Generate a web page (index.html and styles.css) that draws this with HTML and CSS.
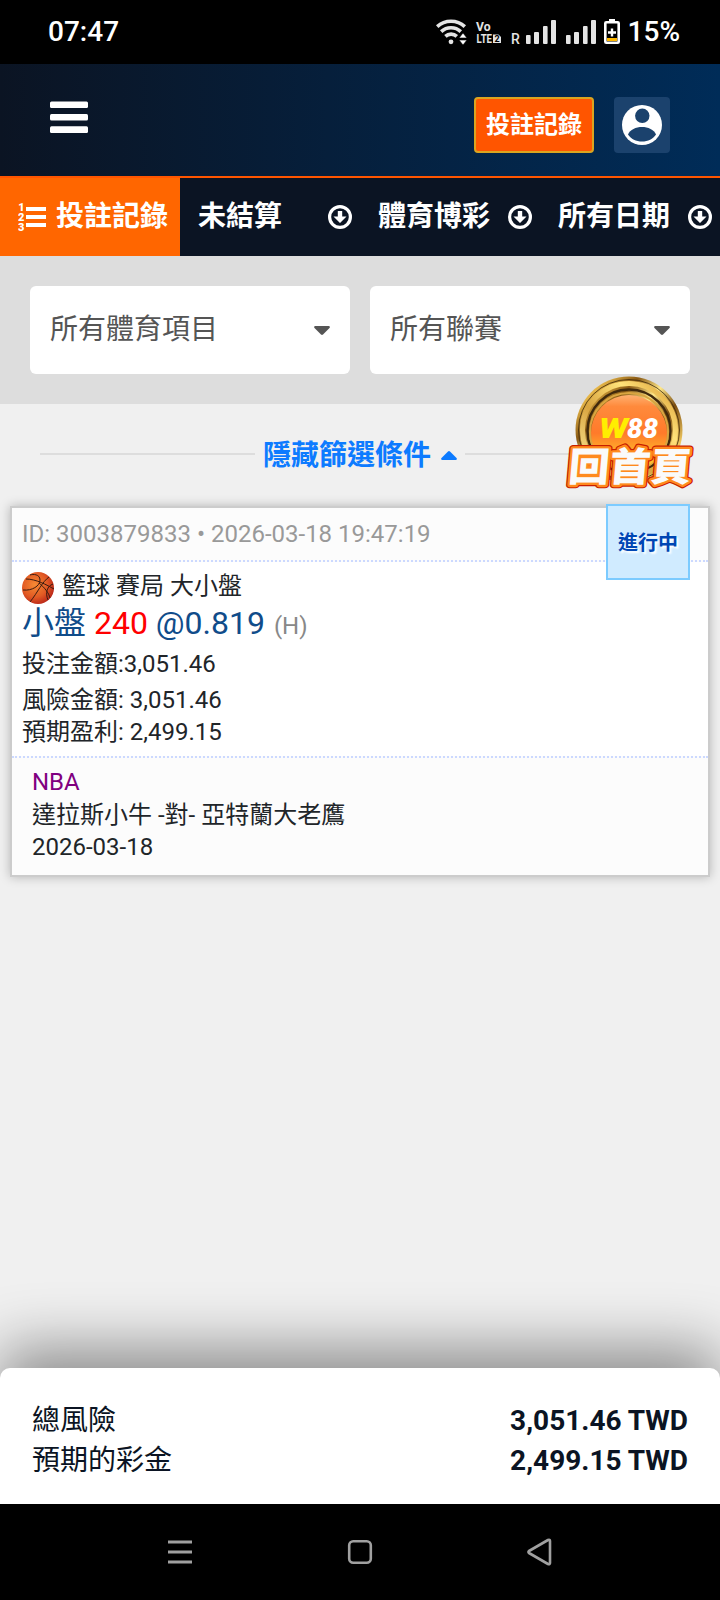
FILE: index.html
```
<!DOCTYPE html>
<html lang="zh-Hant">
<head>
    <meta charset="UTF-8">
    <meta name="viewport" content="width=device-width, initial-scale=1.0">
    <title>投註記錄</title>
    <link rel="stylesheet" href="styles.css">
</head>
<body>

<div class="status-bar">
    <span>07:47</span>
    <div class="status-icons">
        <svg width="188" height="32" viewBox="436 16 188 32">
            <!-- wifi -->
            <g fill="none" stroke="#e4e4e4" stroke-width="3.6">
                <path d="M437.2 26.6a20.5 20.5 0 0 1 27.6 0"/>
                <path d="M441.2 31.6a14.5 14.5 0 0 1 19.6 0"/>
                <path d="M445.4 36.4a8.4 8.4 0 0 1 11.4 0"/>
            </g>
            <circle cx="451" cy="41.8" r="2.4" fill="#e4e4e4"/>
            <path d="M463 33l4 5h-8zM463 45l4-5h-8z" fill="#fff" stroke="#000" stroke-width=".6"/>
            <!-- volte -->
            <text x="476" y="31.300" class="volte" textLength="14.500" lengthAdjust="spacingAndGlyphs">Vo</text>
            <text x="476.500" y="43" class="volte" textLength="15.500" lengthAdjust="spacingAndGlyphs">LTE</text>
            <path d="M493 34.500h5.500l2.500 2.500V43h-8z" fill="#e4e4e4"/>
            <text x="494.400" y="42.200" class="volte-num">2</text>
            <text x="511" y="44" class="roam">R</text>
            <!-- signal -->
            <g fill="#e4e4e4">
                <rect x="526" y="35" width="4.6" height="9" rx="1"/>
                <rect x="534" y="32" width="5" height="12" rx="1"/>
                <rect x="543" y="26" width="4.6" height="18" rx="1"/>
                <rect x="551" y="20" width="5" height="24" rx="1"/>
                <rect x="566" y="35" width="4.6" height="9" rx="1"/>
                <rect x="574" y="32" width="5" height="12" rx="1"/>
                <rect x="583" y="26" width="4.6" height="18" rx="1"/>
                <rect x="591" y="20" width="5" height="24" rx="1"/>
            </g>
            <!-- battery -->
            <path d="M609 19h6v3h-6z" fill="#fff"/>
            <rect x="605.3" y="22.3" width="13.4" height="20.4" rx="1" fill="#000" stroke="#fff" stroke-width="2.6"/>
            <path d="M607 38h10v3h-10z" fill="#ffb800"/>
            <path d="M612 28.5v8M608 32.5h8" stroke="#fff" stroke-width="2.4"/>
        </svg>
        <span>15%</span>
    </div>
</div>

<header class="header">
    <svg class="menu-icon" width="38" height="32" viewBox="0 0 38 32" fill="#fff">
        <rect y="0.5" width="38" height="6.6" rx="1.5"/>
        <rect y="13" width="38" height="6.6" rx="1.5"/>
        <rect y="25.3" width="38" height="6.6" rx="1.5"/>
    </svg>
    <div class="header-actions">
        <button class="btn-record">投註記錄</button>
        <button class="btn-user">
            <svg width="40" height="40" viewBox="0 0 40 40">
                <circle cx="20" cy="20" r="20" fill="#fff"/>
                <circle cx="20.3" cy="10.8" r="7.2" fill="#1b426d"/>
                <path d="M6 29.500C8 24.500 14 22 20 22s12 2.500 14 7.500C31 34 26 36.600 20 36.600S9 34 6 29.500z" fill="#1b426d"/>
            </svg>
        </button>
    </div>
</header>

<nav class="tabs">
    <div class="tab active">
        <svg class="list-icon" width="30" height="30" viewBox="0 0 30 30" fill="#fff">
            <text x="0.300" y="9">1</text>
            <text x="0" y="18.700">2</text>
            <text x="0" y="28.500">3</text>
            <path d="M8 5h20v4H8zM8 13h20v4H8zM8 21h20v4H8z"/>
        </svg>
        <span>投註記錄</span>
    </div>
    <div class="tab">
        <span>未結算</span>
        <svg width="24" height="24" viewBox="0 0 24 24"><circle cx="12" cy="12" r="10.400" fill="none" stroke="#fff" stroke-width="3.200"/><path d="M9.800 6h4.400v5.500H18.500L12 18l-6.500-6.500h4.300z" fill="#fff"/></svg>
    </div>
    <div class="tab">
        <span>體育博彩</span>
        <svg width="24" height="24" viewBox="0 0 24 24"><circle cx="12" cy="12" r="10.400" fill="none" stroke="#fff" stroke-width="3.200"/><path d="M9.800 6h4.400v5.500H18.500L12 18l-6.500-6.500h4.300z" fill="#fff"/></svg>
    </div>
    <div class="tab">
        <span>所有日期</span>
        <svg width="24" height="24" viewBox="0 0 24 24"><circle cx="12" cy="12" r="10.400" fill="none" stroke="#fff" stroke-width="3.200"/><path d="M9.800 6h4.400v5.500H18.500L12 18l-6.500-6.500h4.300z" fill="#fff"/></svg>
    </div>
</nav>

<section class="filters">
    <div class="select">
        <span>所有體育項目</span>
        <svg class="caret" width="16" height="10" viewBox="0 0 16 10"><path d="M1 0h14q1.500.5.500 2L9 8.600q-1 .8-2 0L.5 2Q-.5.5 1 0z"/></svg>
    </div>
    <div class="select">
        <span>所有聯賽</span>
        <svg class="caret" width="16" height="10" viewBox="0 0 16 10"><path d="M1 0h14q1.500.5.500 2L9 8.600q-1 .8-2 0L.5 2Q-.5.5 1 0z"/></svg>
    </div>
</section>

<div class="toggle-row">
    <div class="line"></div>
    <div class="toggle">
        <span>隱藏篩選條件</span>
        <svg class="caret up" width="16" height="10" viewBox="0 0 16 10"><path d="M1 0h14q1.500.5.500 2L9 8.600q-1 .8-2 0L.5 2Q-.5.5 1 0z"/></svg>
    </div>
    <div class="line"></div>

    <!-- floating home button -->
    <svg class="home-float" width="136" height="124" viewBox="560 370 136 124">
        <defs>
            <linearGradient id="gold" x1="0" y1="0" x2="1" y2="1">
                <stop offset="0" stop-color="#5c3c10"/>
                <stop offset=".15" stop-color="#e8b84a"/>
                <stop offset=".3" stop-color="#8a5a14"/>
                <stop offset=".45" stop-color="#ffe88a"/>
                <stop offset=".6" stop-color="#7a4c10"/>
                <stop offset=".8" stop-color="#f0c860"/>
                <stop offset="1" stop-color="#4a2c08"/>
            </linearGradient>
            <linearGradient id="gold2" x1="1" y1="0" x2="0" y2="1">
                <stop offset="0" stop-color="#d89a30"/>
                <stop offset=".3" stop-color="#ffe27a"/>
                <stop offset=".6" stop-color="#d9a540"/>
                <stop offset="1" stop-color="#fff0a0"/>
            </linearGradient>
            <linearGradient id="face" x1="0" y1="0" x2="0" y2="1">
                <stop offset="0" stop-color="#ffb070"/>
                <stop offset=".15" stop-color="#ff8a3c"/>
                <stop offset=".5" stop-color="#ff7a2a"/>
                <stop offset=".75" stop-color="#ffb02a"/>
                <stop offset="1" stop-color="#ffc830"/>
            </linearGradient>
        </defs>
        <circle cx="629" cy="430" r="53.500" fill="url(#gold)"/>
        <circle cx="629" cy="430" r="50.500" fill="none" stroke="#3d2808" stroke-width=".8"/>
        <circle cx="629" cy="430" r="46.500" fill="none" stroke="url(#gold2)" stroke-width="5"/>
        <circle cx="629" cy="431" r="41.500" fill="none" stroke="#40290c" stroke-width="2.400"/>
        <circle cx="629" cy="432" r="39" fill="none" stroke="#d9a540" stroke-width="2"/>
        <circle cx="629" cy="433" r="38" fill="url(#face)"/>
        <g transform="translate(599 437.500)">
            <text class="logo-w" textLength="29" lengthAdjust="spacingAndGlyphs">W</text>
            <text x="28" class="logo-n" textLength="31" lengthAdjust="spacingAndGlyphs">88</text>
        </g>
        <g transform="translate(567.500 480.500) skewX(-5) scale(1 .96)">
            <text class="home-text home-red" textLength="123">回首頁</text>
            <text class="home-text home-orange" textLength="123">回首頁</text>
            <text class="home-text home-white" textLength="123">回首頁</text>
        </g>
    </svg>
</div>

<article class="card">
    <div class="badge">進行中</div>
    <div class="card-head">ID: 3003879833 • 2026-03-18 19:47:19</div>
    <div class="card-body">
        <div class="sport">
            <svg width="32" height="32" viewBox="0 0 32 32">
                <defs>
                    <radialGradient id="ball" cx=".4" cy=".4" r=".65">
                        <stop offset="0" stop-color="#f58a34"/>
                        <stop offset=".6" stop-color="#e25a24"/>
                        <stop offset="1" stop-color="#b82418"/>
                    </radialGradient>
                </defs>
                <circle cx="16" cy="16" r="16" fill="url(#ball)"/>
                <g fill="none" stroke="#3a1a10" stroke-width="1">
                    <path d="M1 18C10 19 18 14 18 8S11 2 8 3"/>
                    <path d="M4 7C14 7 25 13 32 17"/>
                    <path d="M27 5C20 10 16 20 8 30"/>
                    <path d="M31 12C25 14 23 21 26 28"/>
                    <path d="M17 11C22 15 27 21 28 26"/>
                </g>
            </svg>
            <span>籃球 賽局 大小盤</span>
        </div>
        <div class="pick">小盤 <span class="red">240</span> @0.819 <span class="market">(H)</span></div>
        <div class="stake">投注金額:3,051.46</div>
        <div>風險金額: 3,051.46</div>
        <div>預期盈利: 2,499.15</div>
    </div>
    <div class="card-foot">
        <div class="league">NBA</div>
        <div>達拉斯小牛 -對- 亞特蘭大老鷹</div>
        <div>2026-03-18</div>
    </div>
</article>

<footer class="summary">
    <div class="summary-row"><span>總風險</span><b>3,051.46 TWD</b></div>
    <div class="summary-row"><span>預期的彩金</span><b>2,499.15 TWD</b></div>
</footer>

<div class="nav-bar">
    <svg width="28" height="28" viewBox="0 0 28 28" fill="none" stroke="#a0a0a0" stroke-width="3"><path d="M2 4h24M2 14h24M2 24h24"/></svg>
    <svg width="28" height="28" viewBox="0 0 28 28" fill="none" stroke="#a0a0a0" stroke-width="2.600"><rect x="3.200" y="3.200" width="21.600" height="21.600" rx="4"/></svg>
    <svg width="28" height="28" viewBox="0 0 28 28" fill="none" stroke="#a0a0a0" stroke-width="2.600" stroke-linejoin="round"><path d="M3 13l19-11q2-.6 2 1v22q0 1.600-2 1L3 15q-1-1 0-2z"/></svg>
</div>

</body>
</html>
```
FILE: styles.css
```
* {
    box-sizing: border-box;
}

body {
    display: flex;
    flex-direction: column;
    height: 1600px;
    margin: 0;
    overflow: hidden;
    background-color: #f0f0f0;
    color: #212529;
    font-family: Roboto, "Noto Sans CJK TC", sans-serif;
    font-size: 24px;
}

svg {
    display: block;
    flex: none;
}

/* status bar */
.status-bar {
    display: flex;
    justify-content: space-between;
    height: 64px;
    padding: 0 40px 0 48px;
    background-color: #000;
    color: #fff;
    font-size: 28px;
    font-weight: 500;
    line-height: 63px;
}

.status-icons {
    display: flex;
    gap: 4px;
}

.status-icons svg {
    margin-top: 16px;
}

.volte {
    fill: #e4e4e4;
    font-size: 13.5px;
    font-weight: 700;
}

.volte-num {
    fill: #000;
    font-size: 9px;
    font-weight: 700;
}

.roam {
    fill: #e4e4e4;
    font-size: 14px;
    font-weight: 500;
}

/* header */
.header {
    display: flex;
    justify-content: space-between;
    align-items: flex-start;
    height: 114px;
    padding: 33px 50px 0;
    border-bottom: 2px solid #ff5500;
    background: linear-gradient(to right, #0b1423, #002c58);
}

.menu-icon {
    margin-top: 4px;
}

.header-actions {
    display: flex;
    gap: 20px;
}

.btn-record {
    width: 120px;
    height: 56px;
    padding: 0;
    border: 2px solid #daa520;
    border-radius: 4px;
    background-color: #ff5500;
    color: #fff;
    font-family: inherit;
    font-size: 24px;
    font-weight: 700;
    line-height: 50px;
}

.btn-user {
    width: 56px;
    height: 56px;
    padding: 8px;
    border: none;
    border-radius: 4px;
    background-color: #1b426d;
}

/* tabs */
.tabs {
    display: grid;
    grid-template-columns: repeat(4, 180px);
    height: 78px;
    background-color: #0b1423;
    color: #fff;
    font-size: 28px;
    font-weight: 700;
}

.tab {
    display: flex;
    justify-content: space-between;
    align-items: center;
    padding: 0 8px 0 18px;
    line-height: 78px;
}

.tab.active {
    justify-content: flex-start;
    gap: 8px;
    background-color: #ff6600;
}

.list-icon {
    font-size: 11px;
    font-weight: 900;
}

/* filters */
.filters {
    display: grid;
    grid-template-columns: 1fr 1fr;
    gap: 20px;
    padding: 30px;
    background-color: #ddd;
}

.select {
    display: flex;
    justify-content: space-between;
    align-items: center;
    height: 88px;
    padding: 0 20px;
    border-radius: 6px;
    background-color: #fff;
    color: #555;
    font-size: 28px;
    line-height: 88px;
}

.caret {
    fill: currentColor;
    margin-top: 1px;
}

.caret.up {
    margin-top: 0;
    transform: rotate(180deg);
}

.toggle-row {
    position: relative;
    display: flex;
    align-items: center;
    height: 102px;
    padding: 0 40px;
}

.line {
    flex: 1;
    height: 2px;
    margin-top: -2px;
    background-color: #ddd;
}

.toggle {
    display: flex;
    align-items: center;
    gap: 10px;
    padding: 0 8px;
    color: #0d7bff;
    font-size: 28px;
    font-weight: 700;
    line-height: 42px;
}

.toggle span {
    padding-top: 2px;
}

.home-float {
    position: absolute;
    top: -34px;
    right: 24px;
    z-index: 5;
}

.logo-w,
.logo-n {
    font-size: 27px;
    font-weight: 900;
    font-style: italic;
}

.logo-w {
    fill: #ffee00;
}

.logo-n {
    fill: #fff;
}

.home-text {
    font-family: "Noto Sans CJK TC", sans-serif;
    font-size: 41px;
    font-weight: 900;
    stroke-linejoin: round;
}

.home-red {
    fill: #c81e00;
    stroke: #c81e00;
    stroke-width: 7.5px;
}

.home-orange {
    fill: #ff8a1e;
    stroke: #ff8a1e;
    stroke-width: 5px;
}

.home-white {
    fill: #fafafa;
}

/* bet card */
.card {
    position: relative;
    margin: 0 10px;
    border: 2px solid #ccc;
    background-color: #fff;
    box-shadow: 0 0 10px rgba(0, 0, 0, 0.25);
}

.card-head {
    height: 54px;
    padding: 0 10px;
    border-bottom: 2px dotted #ccd9ff;
    background-color: #fcfcfc;
    color: #999;
    line-height: 52px;
}

.badge {
    position: absolute;
    top: -4px;
    right: 18px;
    width: 84px;
    height: 76px;
    border: 2px solid #7ccbff;
    background-color: #d0ebff;
    color: #0046b4;
    font-size: 20px;
    font-weight: 700;
    line-height: 74px;
    text-align: center;
    text-shadow: 2px 2px 2px #fff;
}

.card-body {
    padding: 8px 10px;
    line-height: 32px;
}

.sport {
    display: flex;
    gap: 8px;
}

.sport svg {
    margin: 2px 0 -2px;
}

.pick {
    color: #104c8a;
    font-size: 32px;
    line-height: 42px;
}

.red {
    color: #ff0000;
}

.market {
    margin-left: 1px;
    color: #888;
    font-size: 24px;
    line-height: 1;
}

.stake {
    line-height: 40px;
}

.card-foot {
    padding: 8px 20px 11.5px;
    border-top: 2px dotted #ccd9ff;
    background-color: #fcfcfc;
    line-height: 32.5px;
}

.league {
    color: #800080;
}

/* totals */
.summary {
    height: 136px;
    margin-top: auto;
    padding: 33px 32px 0;
    border-radius: 10px 10px 0 0;
    background-color: #fff;
    color: #0b1423;
    font-size: 28px;
    line-height: 40px;
    box-shadow: 0 -20px 60px rgba(0, 0, 0, 0.41);
}

.summary-row {
    display: flex;
    justify-content: space-between;
}

.summary-row b {
    font-weight: 700;
}

.nav-bar {
    z-index: 1;
    display: flex;
    justify-content: space-between;
    align-items: center;
    height: 96px;
    padding: 0 166px;
    background-color: #000;
}
```
